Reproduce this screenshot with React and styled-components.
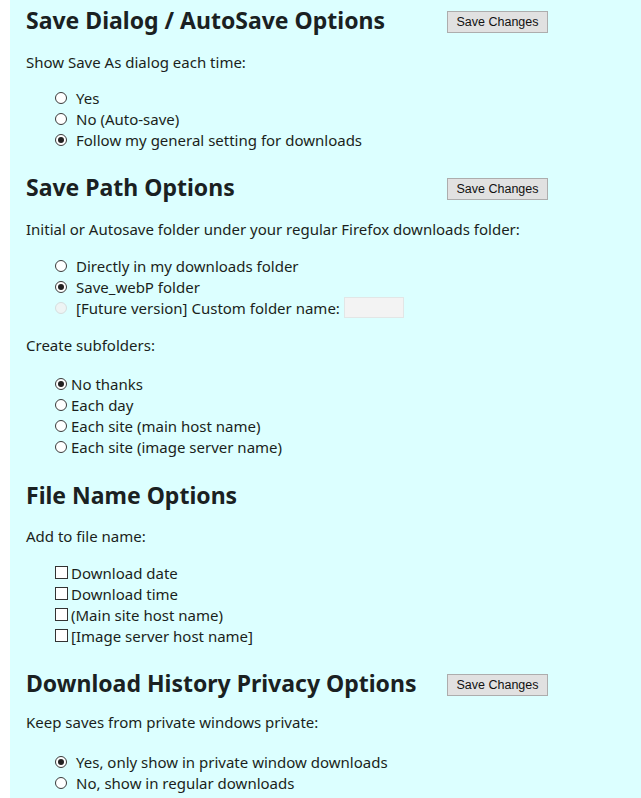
import React from 'react';
import styled, { createGlobalStyle } from 'styled-components';

const GlobalStyle = createGlobalStyle`
  html, body {
    margin: 0;
    padding: 0;
    background: #ffffff;
  }
  body {
    font-family: "Noto Sans", "Open Sans", sans-serif;
    color: #1b1f20;
  }
`;

const Page = styled.div`
  margin-left: 10px;
  min-height: 798px;
  background: #dcffff;
  padding: 5px 16px 20px 16px;
  box-sizing: border-box;
`;

const HeaderRow = styled.div`
  display: grid;
  grid-template-columns: 421px auto;
  align-items: center;
  margin-top: ${p => p.top || '22px'};
`;

const Title = styled.h2`
  margin: 0;
  font-size: 23px;
  line-height: 30px;
  font-weight: 700;
  color: #1a2122;
`;

const SaveButton = styled.button`
  justify-self: start;
  width: 101px;
  height: 22px;
  padding: 0;
  margin-top: 3px;
  border: 1px solid #adadad;
  background: #e1e1e1;
  color: #111;
  font-family: "Liberation Sans", Arial, sans-serif;
  font-size: 12.5px;
  cursor: pointer;
`;

const Prompt = styled.p`
  margin: ${p => p.top || '17px'} 0 0 0;
  font-size: 15px;
  line-height: 21px;
`;

const OptionList = styled.ul`
  list-style: none;
  margin: ${p => p.top || '15px'} 0 0 0;
  padding: 0 0 0 29px;
`;

const Option = styled.li`
  display: flex;
  align-items: center;
  height: 21px;
  font-size: 15px;
`;

const Radio = styled.span`
  box-sizing: border-box;
  width: 12px;
  height: 12px;
  border-radius: 50%;
  border: 1px solid ${p => (p.disabled ? '#d6dede' : '#3a3a3a')};
  background: ${p => (p.disabled ? '#eef4f4' : '#ffffff')};
  margin-right: ${p => (p.tight ? '4px' : '9px')};
  display: flex;
  align-items: center;
  justify-content: center;
  flex-shrink: 0;

  &::after {
    content: '';
    width: 6px;
    height: 6px;
    border-radius: 50%;
    background: #222;
    display: ${p => (p.checked ? 'block' : 'none')};
  }
`;

const Box = styled.span`
  box-sizing: border-box;
  width: 13px;
  height: 13px;
  border: 1px solid #333;
  background: #ffffff;
  margin-right: 3px;
  flex-shrink: 0;
`;

const FolderInput = styled.input`
  box-sizing: border-box;
  width: 60px;
  height: 21px;
  margin-left: 4px;
  border: 1px solid #e2e6e6;
  background: #f3f3f3;
`;

const RadioRow = ({ checked, disabled, tight, children }) => (
  <Option>
    <Radio checked={checked} disabled={disabled} tight={tight} />
    {children}
  </Option>
);

const CheckRow = ({ children }) => (
  <Option>
    <Box />
    {children}
  </Option>
);

const Header = ({ title, button, top }) => (
  <HeaderRow top={top}>
    <Title>{title}</Title>
    {button && <SaveButton>Save Changes</SaveButton>}
  </HeaderRow>
);

export default function App() {
  return (
    <Page>
      <GlobalStyle />

      <Header top="0" title="Save Dialog / AutoSave Options" button />
      <Prompt>Show Save As dialog each time:</Prompt>
      <OptionList top="14px">
        <RadioRow>Yes</RadioRow>
        <RadioRow>No (Auto-save)</RadioRow>
        <RadioRow checked>Follow my general setting for downloads</RadioRow>
      </OptionList>

      <Header title="Save Path Options" button />
      <Prompt>
        Initial or Autosave folder under your regular Firefox downloads folder:
      </Prompt>
      <OptionList>
        <RadioRow>Directly in my downloads folder</RadioRow>
        <RadioRow checked>Save_webP folder</RadioRow>
        <RadioRow disabled>
          [Future version] Custom folder name: <FolderInput disabled />
        </RadioRow>
      </OptionList>
      <Prompt>Create subfolders:</Prompt>
      <OptionList top="17px">
        <RadioRow tight checked>No thanks</RadioRow>
        <RadioRow tight>Each day</RadioRow>
        <RadioRow tight>Each site (main host name)</RadioRow>
        <RadioRow tight>Each site (image server name)</RadioRow>
      </OptionList>

      <Header top="23px" title="File Name Options" />
      <Prompt top="16px">Add to file name:</Prompt>
      <OptionList>
        <CheckRow>Download date</CheckRow>
        <CheckRow>Download time</CheckRow>
        <CheckRow>(Main site host name)</CheckRow>
        <CheckRow>[Image server host name]</CheckRow>
      </OptionList>

      <Header title="Download History Privacy Options" button />
      <Prompt top="14px">Keep saves from private windows private:</Prompt>
      <OptionList top="18px">
        <RadioRow checked>Yes, only show in private window downloads</RadioRow>
        <RadioRow>No, show in regular downloads</RadioRow>
      </OptionList>
    </Page>
  );
}
